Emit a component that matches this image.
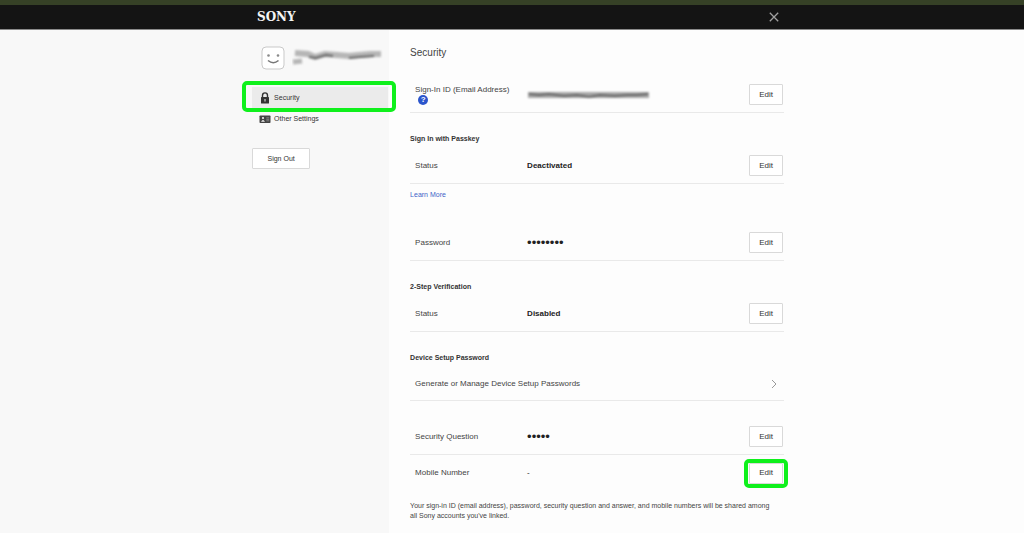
<script lang="ts">
	let current = 'security';
</script>

<div class="page">
	<header>
		<div class="header-inner">
			<span class="logo">SONY</span>
			<button class="close" aria-label="Close">
				<svg width="10" height="10" viewBox="0 0 10 10">
					<path d="M0.8 0.8 L9.2 9.2 M9.2 0.8 L0.8 9.2" stroke="#a0a0a0" stroke-width="1.3" fill="none" />
				</svg>
			</button>
		</div>
	</header>

	<div class="columns">
		<aside>
			<div class="profile">
				<svg class="avatar" width="24" height="24" viewBox="0 0 24 24">
					<rect x="1" y="1" width="22" height="22" rx="4" fill="#fff" stroke="#c9c9c9" />
					<circle cx="7.5" cy="9.5" r="1.3" fill="#8a8a8a" />
					<circle cx="17" cy="9.5" r="1.3" fill="#8a8a8a" />
					<path d="M7 14.5 Q12.3 19 17.5 14.5" stroke="#777" stroke-width="1.6" fill="none" />
				</svg>
				<svg class="smudge" width="92" height="20" viewBox="0 0 92 20" role="img" aria-label="Hidden name">
					<g fill="none" stroke="#8b8b8b">
						<path d="M3 5 L16 6 L23 9 L33 6 L45 7 L57 8 L67 7 L78 6 L89 6" stroke-width="6" opacity="0.6" />
						<path d="M17 9 L24 10 L34 7 L41 8 M57 10 L68 9 L82 8" stroke="#666" stroke-width="2" />
						<path d="M1 14 L10 13" stroke-width="5" opacity="0.6" />
					</g>
				</svg>
			</div>

			<nav>
				<a href="#security" class:active={current === 'security'}>
					<svg width="12" height="12" viewBox="0 0 12 12">
						<path d="M3.5 6 V3.4 A2.5 2.5 0 0 1 8.5 3.4 V6" stroke="#333" stroke-width="1.4" fill="none" />
						<rect x="2" y="5" width="8" height="6.5" rx="0.6" fill="#333" />
						<path d="M6 7 V9.6" stroke="#ddd" stroke-width="1.1" />
					</svg>
					Security
				</a>
				<a href="#other">
					<svg width="12" height="12" viewBox="0 0 12 12">
						<rect x="0.5" y="2.5" width="11" height="7.5" rx="0.8" fill="#444" />
						<circle cx="4" cy="5" r="1.1" fill="#eee" />
						<path d="M2 8.7 Q4 5.3 6 8.7 Z" fill="#eee" />
						<path d="M7.3 4.8 H10.2 M7.3 6.3 H10.2 M7.3 7.8 H10.2" stroke="#aaa" stroke-width="0.6" />
					</svg>
					Other Settings
				</a>
			</nav>

			<button class="btn sign-out">Sign Out</button>
		</aside>

		<main>
			<h1>Security</h1>

			<div class="row">
				<span class="label">
					Sign-In ID (Email Address)
					<button class="help" aria-label="Help">?</button>
				</span>
				<svg class="email" width="124" height="10" viewBox="0 0 124 10" role="img" aria-label="Hidden email address">
					<path d="M1 5 H122" stroke="#8b8b8b" stroke-width="6" opacity="0.75" />
					<path d="M2 4 L12 5 L22 4 L37 6 L50 5 L62 7 L73 5 L88 6 L100 5 L110 5 L121 4" stroke="#666" stroke-width="2" fill="none" />
				</svg>
				<button class="btn edit">Edit</button>
			</div>

			<h2>Sign In with Passkey</h2>
			<div class="row">
				<span class="label">Status</span>
				<strong class="value">Deactivated</strong>
				<button class="btn edit">Edit</button>
			</div>
			<a class="learn" href="#passkey">Learn More</a>

			<div class="row after-link">
				<span class="label">Password</span>
				<span class="value dots">••••••••</span>
				<button class="btn edit">Edit</button>
			</div>

			<h2>2-Step Verification</h2>
			<div class="row">
				<span class="label">Status</span>
				<strong class="value">Disabled</strong>
				<button class="btn edit">Edit</button>
			</div>

			<h2>Device Setup Password</h2>
			<a class="row link-row" href="#device">
				<span>Generate or Manage Device Setup Passwords</span>
				<svg width="6" height="10" viewBox="0 0 6 10">
					<path d="M1 1 L5 5 L1 9" stroke="#999" fill="none" />
				</svg>
			</a>

			<div class="row spaced">
				<span class="label">Security Question</span>
				<span class="value dots">•••••</span>
				<button class="btn edit">Edit</button>
			</div>
			<div class="row last">
				<span class="label">Mobile Number</span>
				<span class="value">-</span>
				<button class="btn edit marked">Edit</button>
			</div>

			<p>
				Your sign-in ID (email address), password, security question and answer, and mobile numbers will be shared among
				<br />
				all Sony accounts you've linked.
			</p>
			<a class="learn more" href="#linked">Learn More</a>
		</main>
	</div>
</div>

<style>
	:global(body) {
		margin: 0;
	}

	.page {
		height: 100vh;
		overflow: hidden;
		display: flex;
		flex-direction: column;
		box-sizing: border-box;
		border-top: 5px solid #364126;
		background: #fdfdfd;
		color: #444;
		font: 8px/10px 'Liberation Sans', Arial, sans-serif;
	}

	header {
		flex: none;
		height: 24px;
		padding-left: 25%;
		background: #141414;
		border-bottom: 1px solid #8a8a8a;
	}

	.header-inner {
		display: flex;
		align-items: center;
		justify-content: space-between;
		max-width: 523px;
		height: 100%;
	}

	.logo {
		padding-left: 1px;
		color: #f4f4f4;
		font: bold 12px/14px 'DejaVu Serif', serif;
	}

	.close {
		display: flex;
		padding: 0;
		border: none;
		background: none;
		cursor: pointer;
	}

	.columns {
		flex: 1;
		display: grid;
		grid-template-columns: 38% 1fr;
		min-height: 0;
	}

	aside {
		display: flex;
		flex-direction: column;
		align-items: flex-end;
		padding: 16px 1px 0 0;
		background: #f8f8f8;
	}

	.profile,
	nav {
		width: 136px;
	}

	.profile {
		display: flex;
		align-items: center;
		gap: 7px;
		box-sizing: border-box;
		padding-left: 9px;
	}

	.avatar,
	.smudge {
		flex: none;
	}

	.smudge g,
	.email {
		filter: blur(1px);
	}

	nav {
		padding-top: 17px;
		font-size: 7px;
	}

	nav a {
		position: relative;
		display: flex;
		align-items: center;
		gap: 3px;
		height: 21px;
		padding-left: 7px;
		color: #333;
		text-decoration: none;
	}

	nav a.active {
		background: #ebebeb;
	}

	/* green callout around the selected item */
	nav a.active::after {
		content: '';
		position: absolute;
		inset: -6px -8px -4px -10px;
		border: 4px solid #0ff01c;
		border-radius: 5px;
	}

	.btn {
		box-sizing: border-box;
		height: 21px;
		padding: 0;
		border: 1px solid #d9d9d9;
		border-radius: 1px;
		background: #fff;
		color: #333;
		font: inherit;
		cursor: pointer;
	}

	.sign-out {
		width: 58px;
		margin: 19px 78px 0 0;
		font-size: 7px;
	}

	main {
		width: 374px;
		max-width: 100%;
		padding: 16px 0 0 21px;
	}

	h1 {
		margin: 0 0 17px;
		font-size: 10px;
		font-weight: normal;
		line-height: 14px;
	}

	h2 {
		margin: 21px 0 4px;
		color: #333;
		font-size: 7px;
		line-height: 10px;
	}

	.row {
		display: flex;
		align-items: center;
		box-sizing: border-box;
		height: 36px;
		padding: 0 1px 0 5px;
		border-bottom: 1px solid #e9e9e9;
	}

	.label {
		width: 112px;
	}

	.value {
		color: #222;
	}

	.edit {
		position: relative;
		width: 34px;
		margin-left: auto;
	}

	.marked::after {
		content: '';
		position: absolute;
		inset: -5px -6px;
		border: 4px solid #0ff01c;
		border-radius: 5px;
	}

	.help {
		display: block;
		width: 10px;
		height: 10px;
		margin-left: 3px;
		padding: 0;
		border: none;
		border-radius: 50%;
		background: #2b55cc;
		color: #fff;
		font: bold 8px/10px 'Liberation Sans', Arial, sans-serif;
	}

	.dots {
		font-size: 13px;
	}

	.learn {
		display: block;
		margin-top: 6px;
		color: #3f63c8;
		font-size: 7px;
		text-decoration: none;
	}

	.after-link {
		margin-top: 25px;
	}

	.link-row {
		justify-content: space-between;
		height: 34px;
		padding-right: 7px;
		color: #444;
		text-decoration: none;
	}

	.spaced {
		margin-top: 18px;
	}

	.last {
		border-bottom: none;
	}

	p {
		margin: 10px 0 0;
		font-size: 7px;
	}

	.more {
		margin-top: 10px;
	}
</style>
